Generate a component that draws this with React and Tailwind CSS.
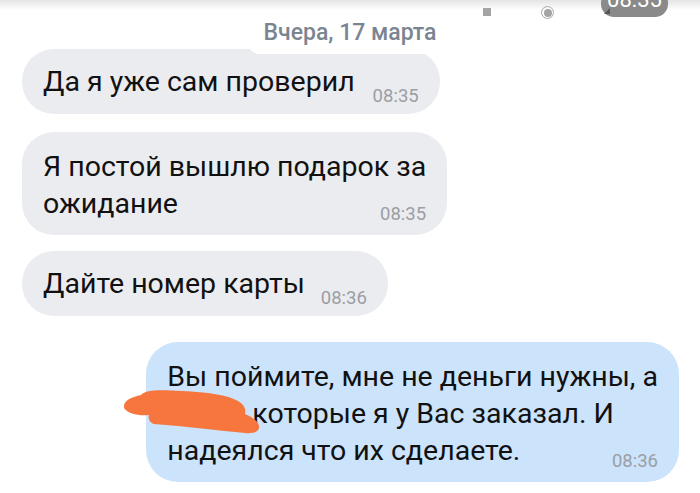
import React from 'react'

const font = { fontFamily: 'Roboto, "Noto Sans", sans-serif' }

function Time({ children, className = '' }) {
  return (
    <span className={`text-[18.5px] leading-[20px] text-[#9b9ea4] whitespace-nowrap ${className}`}>
      {children}
    </span>
  )
}

export default function App() {
  return (
    <div className="relative w-[700px] h-[493px] bg-white overflow-hidden" style={font}>
      {/* status strip at top */}
      <div className="absolute top-0 left-0 right-0 h-[10px] bg-gradient-to-b from-[#e4e4e4] to-white" />
      <div className="absolute top-[8px] left-[483px] w-[8px] h-[8px] bg-[#a4a4a4]" />
      <div className="absolute top-[6px] left-[541px] w-[13px] h-[13px] rounded-full border border-[#a8a8a8] flex items-center justify-center">
        <div className="w-[8px] h-[8px] rounded-full bg-[#a4a4a4]" />
      </div>
      <div className="absolute top-[-10px] left-[601px] w-[67px] h-[27px] rounded-[13px] bg-[#8a8a8a] flex items-start justify-center text-white text-[22px] leading-[22px]">
        <span className="-mt-[1px]">08:35</span>
        <div className="absolute left-[3px] bottom-[3px] w-0 h-0 border-l-[6px] border-l-transparent border-b-[6px] border-b-[#555]" />
      </div>

      <div className="flex flex-col items-start pt-[49px] px-[22px]">
        {/* bubble 1 */}
        <div className="flex items-end rounded-[32px] bg-[#ebecf0] px-[21px] py-[14px]">
          <span className="text-[28.5px] leading-[37px] text-[#111]">Да я уже сам проверил</span>
          <Time className="ml-[18px] -mb-[6px]">08:35</Time>
        </div>

        {/* bubble 2 */}
        <div className="mt-[18px] flex flex-col rounded-[32px] bg-[#ebecf0] px-[21px] pt-[16px] pb-[11px]">
          <span className="text-[28.5px] leading-[37px] text-[#111]">
            Я постой вышлю подарок за
            <br />
            ожидание
          </span>
          <Time className="self-end -mt-[18px]">08:35</Time>
        </div>

        {/* bubble 3 */}
        <div className="mt-[16px] flex items-end rounded-[32px] bg-[#ebecf0] px-[21px] py-[14px]">
          <span className="text-[28.5px] leading-[37px] text-[#111]">Дайте номер карты</span>
          <Time className="ml-[16px] -mb-[6px]">08:36</Time>
        </div>

        {/* bubble 4 (outgoing) */}
        <div className="mt-[26px] self-end -mr-[1px] flex flex-col rounded-[32px] bg-[#cce3fc] px-[21px] pt-[16px] pb-[11px]">
          <span className="text-[28.5px] leading-[37px] text-[#111]">
            Вы поймите, мне не деньги нужны, а
            <br />
            <span className="inline-block w-[85px]" />
            которые я у Вас заказал. И
            <br />
            надеялся что их сделаете.
          </span>
          <Time className="self-end -mt-[18px] text-[#8e9aa8]">08:36</Time>
        </div>
      </div>

      {/* date chip */}
      <div className="absolute top-[13px] left-[248px] w-[204px] h-[41px] rounded-[12px] bg-white flex items-center justify-center">
        <span className="text-[23px] font-medium text-[#7b8591]">Вчера, 17 марта</span>
      </div>

      {/* orange scribble */}
      <svg className="absolute left-[110px] top-[380px]" width="160" height="60" viewBox="0 0 160 60">
        <path
          d="M14 28 C 13 20, 22 17, 31 15 C 36 9, 52 10, 72 11 C 97 12, 118 15, 128 21 C 135 25, 136 30, 135 34 C 142 37, 148 41, 149 46 C 150 52, 143 54, 135 53 C 110 51, 75 46, 44 44 C 39 42, 38 38, 39 35 C 29 36, 18 34, 14 28 Z"
          fill="#f6763d"
        />
      </svg>
    </div>
  )
}
